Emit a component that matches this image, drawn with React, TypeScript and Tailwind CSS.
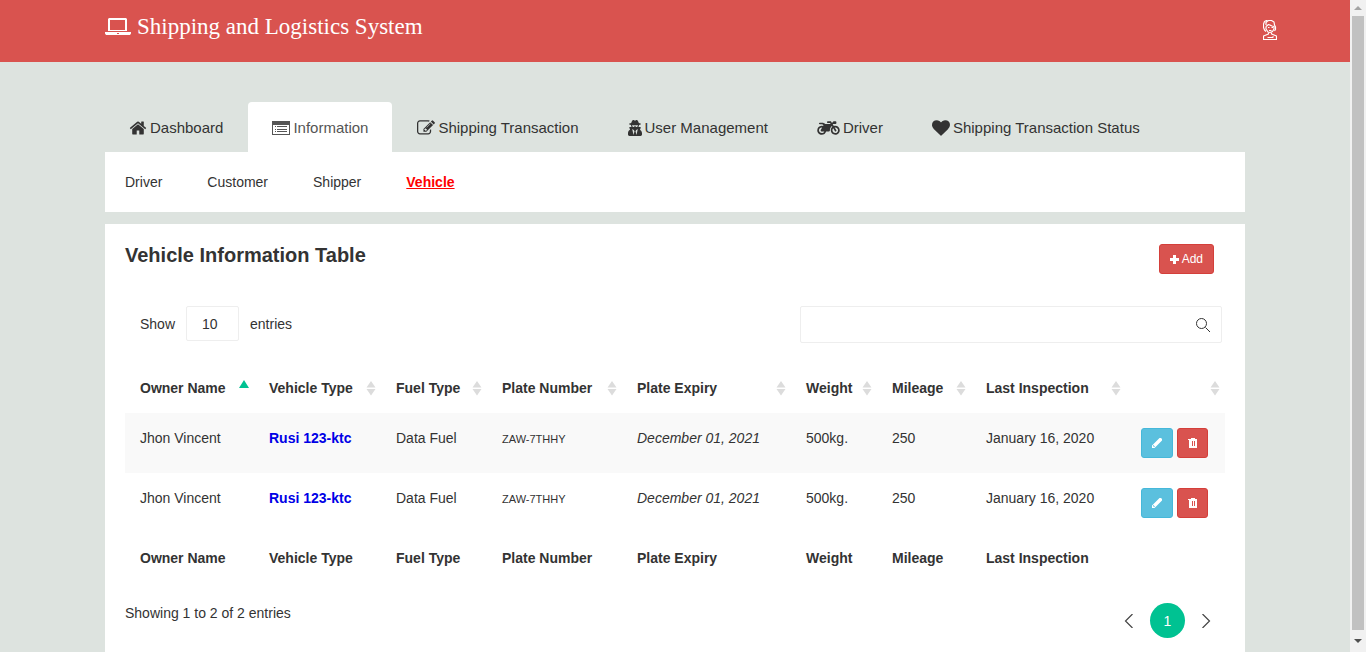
import type { ReactNode } from "react";
import { FaMotorcycle, FaUserSecret } from "react-icons/fa";

function Glyph({ d, className }: { d: string; className: string }) {
  return (
    <svg className={className} viewBox="0 0 1792 1792" fill="currentColor" fillRule="evenodd" aria-hidden="true">
      <path d={d} />
    </svg>
  );
}

const home =
  "M1472 992v480q0 26-19 45t-45 19h-384v-384h-256v384h-384q-26 0-45-19t-19-45v-480q0-1 .5-3t.5-3l575-474 575 474q1 2 1 6zm223-69l-62 74q-8 9-21 11h-3q-13 0-21-7l-692-577-692 577q-12 8-24 7-13-2-21-11l-62-74q-8-10-7-23.5t11-21.5l719-599q32-26 76-26t76 26l244 204v-195q0-14 9-23t23-9h192q14 0 23 9t9 23v408l219 182q10 8 11 21.5t-7 23.5z";
const edit =
  "M888 1184l116-116-152-152-116 116v56h96v96h56zm440-720q-16-16-33 1l-350 350q-17 17-1 33t33-1l350-350q17-17 1-33zm80 594v190q0 119-84.5 203.5t-203.5 84.5h-832q-119 0-203.5-84.5t-84.5-203.5v-832q0-119 84.5-203.5t203.5-84.5h832q63 0 117 25 15 7 18 23 3 17-9 29l-49 49q-14 14-32 8-23-6-45-6h-832q-66 0-113 47t-47 113v832q0 66 47 113t113 47h832q66 0 113-47t47-113v-126q0-13 9-22l64-64q15-15 35-7t20 29zm-96-738l288 288-672 672h-288v-288zm444 132l-92 92-288-288 92-92q28-28 68-28t68 28l152 152q28 28 28 68t-28 68z";
const heart =
  "M896 1664q-26 0-44-18l-624-602q-10-8-27.5-26t-55.5-65.5-68-97.5-53.5-121-23.5-138q0-220 127-344t351-124q62 0 126.5 21.5t120 58 95.5 68.5 76 68q36-36 76-68t95.5-68.5 120-58 126.5-21.5q224 0 351 124t127 344q0 221-229 450l-623 600q-18 18-44 18z";

function LaptopIcon() {
  return (
    <svg className="h-[17px] w-[26px]" viewBox="0 0 26 17" fill="currentColor" aria-hidden="true">
      <path
        fillRule="evenodd"
        d="M4 0H21L22 1V13H3V1zM5 2V12H20V2zM0 14H26V15.500L25 17H1L0 15.500zM12 15V16H14V15z"
      />
    </svg>
  );
}

function ListIcon() {
  return (
    <svg className="h-3.5 w-[18px]" viewBox="0 0 18 14" fill="currentColor" shapeRendering="crispEdges" aria-hidden="true">
      <path
        fillRule="evenodd"
        d="M0 0h18v14H0zM1 4v9h16V4zM3 5h1v1H3zM5 5h10v1H5zM3 8h1v1H3zM5 8h10v1H5zM3 10h1v1H3zM5 10h10v1H5z"
      />
    </svg>
  );
}

function PlusIcon() {
  return (
    <svg className="size-[9px]" viewBox="0 0 9 9" fill="currentColor" shapeRendering="crispEdges" aria-hidden="true">
      <path d="M3 0h3v3h3v3H6v3H3V6H0V3h3z" />
    </svg>
  );
}

function PencilIcon() {
  return (
    <svg className="size-2.5" viewBox="0 0 10 10" fill="currentColor" aria-hidden="true">
      <path fillRule="evenodd" d="M7.500 0H9l1 1v1.500L3.500 9L2.500 10H0V7.500zM1 7.500v1h1V9h1L1.500 7z" />
    </svg>
  );
}

function TrashIcon() {
  return (
    <svg className="h-2.5 w-[9px]" viewBox="0 0 9 10" fill="currentColor" shapeRendering="crispEdges" aria-hidden="true">
      <path fillRule="evenodd" d="M3 0h4v1h2v1H8.500V10H1V2H0V1h3zM4 3v5h1V3zM6 3v5h1V3z" />
    </svg>
  );
}

function ProfileIcon() {
  return (
    <svg
      className="h-5 w-3.5"
      viewBox="0 0 14 20"
      fill="none"
      stroke="currentColor"
      strokeWidth="1.200"
      strokeLinejoin="round"
      aria-hidden="true"
    >
      <path d="M3 11.500L1.500 10L.5 7.500V4L1.500 1.500L3.500.5L4.500 1L6 .5H8.500L11 2L11.500 5L12.500 7V9.500L11.500 11" />
      <path d="M4.500 1L3 2.500V5M3 6.500V9L5 12L7 12.500L9.500 11.500L11 9V6.500L9 6L5.500 4.500L3 6.500" />
      <path d="M5 7.500h1.500M8.500 7.500H10M6 10.500h2.500" />
      <path d="M5.500 12.500V14L.5 16V19.500H13.500V16L8.500 14V12.500M4.500 17.500H9.500L10.500 16.500" />
    </svg>
  );
}

function SortMark({ ascending }: { ascending?: boolean }) {
  return ascending ? (
    <svg className="mb-2 h-2 w-2.5" viewBox="0 0 10 8" aria-hidden="true">
      <path d="M5 0l5 8H0z" fill="#00c292" />
    </svg>
  ) : (
    <svg className="h-4 w-2.5" viewBox="0 0 10 16" fill="#dcdcdc" aria-hidden="true">
      <path d="M5 1l4.500 6.500h-9zM5 15.500L.5 9h9z" />
    </svg>
  );
}

const tabs: { label: string; icon: ReactNode; active?: boolean }[] = [
  { label: "Dashboard", icon: <Glyph d={home} className="h-[18px] w-[18px]" /> },
  { label: "Information", icon: <ListIcon />, active: true },
  { label: "Shipping Transaction", icon: <Glyph d={edit} className="h-[18px] w-[18px]" /> },
  { label: "User Management", icon: <FaUserSecret className="h-4 w-3.5" /> },
  { label: "Driver", icon: <FaMotorcycle className="h-[18px] w-[23px]" /> },
  { label: "Shipping Transaction Status", icon: <Glyph d={heart} className="h-[18px] w-[18px]" /> },
];

const columns = [
  { label: "Owner Name", width: "w-[129px]" },
  { label: "Vehicle Type", width: "w-[127px]" },
  { label: "Fuel Type", width: "w-[106px]" },
  { label: "Plate Number", width: "w-[135px]" },
  { label: "Plate Expiry", width: "w-[169px]" },
  { label: "Weight", width: "w-[86px]" },
  { label: "Mileage", width: "w-[94px]" },
  { label: "Last Inspection", width: "w-[155px]" },
  { label: "", width: "w-[99px]" },
];

const vehicle = {
  owner: "Jhon Vincent",
  type: "Rusi 123-ktc",
  fuel: "Data Fuel",
  plate: "ZAW-7THHY",
  expiry: "December 01, 2021",
  weight: "500kg.",
  mileage: "250",
  inspection: "January 16, 2020",
};
const vehicles = [
  { id: 1, ...vehicle },
  { id: 2, ...vehicle },
];

export default function App() {
  return (
    <div className="flex h-screen overflow-hidden bg-[#dde3df] font-['Liberation_Sans',Arial,sans-serif] text-sm leading-5 text-[#333]">
      <div className="min-w-0 flex-1 overflow-hidden">
        <header className="bg-[#d9534f] text-white">
          <div className="mx-auto flex h-[62px] max-w-[1140px] justify-between">
            <a
              href="#"
              className="flex h-[53px] items-center gap-1.5 font-['Liberation_Serif','Times_New_Roman',serif] text-[23px]"
            >
              <LaptopIcon />
              Shipping and Logistics System
            </a>
            <button type="button" aria-label="Account" className="-mr-8 flex items-center pb-0.5">
              <ProfileIcon />
            </button>
          </div>
        </header>

        <main className="mx-auto max-w-[1140px] pt-10">
          <nav aria-label="Main" className="flex gap-px">
            {tabs.map((tab) => (
              <a
                key={tab.label}
                href="#"
                className={
                  tab.active
                    ? "flex h-[50px] items-center gap-[3px] rounded-t bg-white px-6 pt-0.5 text-[15px] text-[#555]"
                    : "flex h-[50px] items-center gap-[3px] px-6 pt-0.5 text-[15px]"
                }
              >
                {tab.icon}
                {tab.label}
              </a>
            ))}
          </nav>

          <nav aria-label="Information" className="flex h-[60px] items-center gap-[45px] bg-white px-5">
            <a href="#">Driver</a>
            <a href="#">Customer</a>
            <a href="#">Shipper</a>
            <a href="#" className="font-bold text-[#f00] underline">
              Vehicle
            </a>
          </nav>

          <section className="mt-3 bg-white p-5 pb-10">
            <div className="flex items-start justify-between pr-[11px]">
              <h1 className="text-xl leading-[22px] font-bold">Vehicle Information Table</h1>
              <button
                type="button"
                className="flex h-[30px] items-center gap-[3px] rounded-[3px] border border-[#d43f3a] bg-[#d9534f] px-2.5 text-xs text-white"
              >
                <PlusIcon />
                Add
              </button>
            </div>

            <div className="mt-8 flex items-start justify-between pr-[3px] pl-[15px]">
              <label className="flex h-[35px] items-center gap-[11px]">
                Show
                <select className="h-[35px] w-[53px] appearance-none rounded-xs border border-[#eee] bg-white px-[15px]">
                  <option>10</option>
                </select>
                entries
              </label>
              <label className="flex h-[37px] w-[422px] items-center rounded-xs border border-[#eee] pr-[11px]">
                <input type="search" aria-label="Search vehicles" className="h-full min-w-0 flex-1 px-3 outline-none" />
                <svg className="h-3.5 w-3.5" viewBox="0 0 14 14" fill="none" stroke="currentColor" aria-hidden="true">
                  <circle cx="5.500" cy="5.500" r="5" />
                  <path d="M9.500 9.500L14 14" />
                </svg>
              </label>
            </div>

            <table className="mt-5 w-full table-fixed border-collapse text-left">
              <thead>
                <tr>
                  {columns.map((column, i) => (
                    <th key={i} scope="col" className={`h-[50px] pr-[5px] pl-[15px] ${column.width}`}>
                      <div className="flex items-center justify-between whitespace-nowrap">
                        <span>{column.label}</span>
                        <SortMark ascending={i === 0} />
                      </div>
                    </th>
                  ))}
                </tr>
              </thead>
              <tbody>
                {vehicles.map((row) => (
                  <tr key={row.id} className="align-top whitespace-nowrap odd:bg-[#f9f9f9]">
                    <td className="py-[15px] pl-[15px]">{row.owner}</td>
                    <td className="py-[15px] pl-[15px] font-bold text-[#0000e6]">{row.type}</td>
                    <td className="py-[15px] pl-[15px]">{row.fuel}</td>
                    <td className="py-[15px] pl-[15px] text-[11px] leading-[22px]">{row.plate}</td>
                    <td className="py-[15px] pl-[15px] italic">{row.expiry}</td>
                    <td className="py-[15px] pl-[15px]">{row.weight}</td>
                    <td className="py-[15px] pl-[15px]">{row.mileage}</td>
                    <td className="py-[15px] pl-[15px]">{row.inspection}</td>
                    <td className="py-[15px] pl-[15px]">
                      <div className="flex gap-1 text-white">
                        <button
                          type="button"
                          aria-label="Edit vehicle"
                          className="flex h-[30px] w-8 items-center justify-center rounded-[3px] border border-[#46b8da] bg-[#5bc0de]"
                        >
                          <PencilIcon />
                        </button>
                        <button
                          type="button"
                          aria-label="Delete vehicle"
                          className="flex h-[30px] w-[31px] items-center justify-center rounded-[3px] border border-[#d43f3a] bg-[#d9534f]"
                        >
                          <TrashIcon />
                        </button>
                      </div>
                    </td>
                  </tr>
                ))}
              </tbody>
              <tfoot>
                <tr>
                  {columns.map((column, i) => (
                    <th key={i} className="h-[50px] pl-[15px] whitespace-nowrap">
                      {column.label}
                    </th>
                  ))}
                </tr>
              </tfoot>
            </table>

            <div className="mt-5 flex items-start justify-between pr-3.5">
              <p>Showing 1 to 2 of 2 entries</p>
              <nav aria-label="Pages" className="flex items-center gap-4 text-[#444]">
                <button type="button" aria-label="Previous page">
                  <svg className="h-3.5 w-2.5" viewBox="0 0 10 14" fill="none" stroke="currentColor" strokeWidth="1.200">
                    <path d="M8.500 0L1.500 7l7 7" />
                  </svg>
                </button>
                <button type="button" className="size-[35px] rounded-full bg-[#00c292] text-white">
                  1
                </button>
                <button type="button" aria-label="Next page">
                  <svg className="h-3.5 w-2.5" viewBox="0 0 10 14" fill="none" stroke="currentColor" strokeWidth="1.200">
                    <path d="M1.500 0l7 7-7 7" />
                  </svg>
                </button>
              </nav>
            </div>
          </section>
        </main>
      </div>

      <div className="flex w-4 flex-col items-center bg-[#f1f1f1]" aria-hidden="true">
        <div className="flex h-4 items-center">
          <svg className="h-1 w-2" viewBox="0 0 8 4">
            <path d="M4 0l4 4H0z" fill="#a3a3a3" />
          </svg>
        </div>
        <div className="w-3 flex-1 bg-[#c1c1c1]" />
        <div className="flex h-[22px] items-center">
          <svg className="h-1 w-2" viewBox="0 0 8 4">
            <path d="M0 0h8L4 4z" fill="#505050" />
          </svg>
        </div>
      </div>
    </div>
  );
}
